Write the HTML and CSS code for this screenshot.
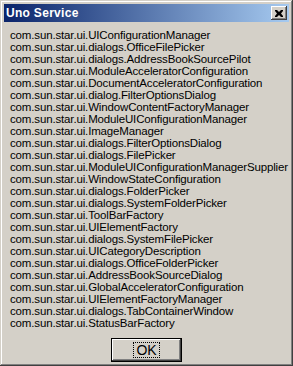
FILE: index.html
```html
<!DOCTYPE html>
<html lang="en">
<head>
  <meta charset="UTF-8">
  <title>Uno Service</title>
  <link rel="stylesheet" href="styles.css">
</head>
<body>

  <div class="window">
    <div class="caption">
      <span class="caption-title">Uno Service</span>
      <button class="caption-close" type="button" aria-label="Close">
        <svg width="8" height="7" viewBox="0 0 8 7">
          <path d="M0 0h2l2 2 2-2h2v1L6 3.5 8 6v1H6L4 5 2 7H0V6l2-2.5L0 1z" fill="#000"/>
        </svg>
      </button>
    </div>

    <div class="client">
      <ul class="service-list">
        <li>com.sun.star.ui.UIConfigurationManager</li>
        <li>com.sun.star.ui.dialogs.OfficeFilePicker</li>
        <li>com.sun.star.ui.dialogs.AddressBookSourcePilot</li>
        <li>com.sun.star.ui.ModuleAcceleratorConfiguration</li>
        <li>com.sun.star.ui.DocumentAcceleratorConfiguration</li>
        <li>com.sun.star.ui.dialog.FilterOptionsDialog</li>
        <li>com.sun.star.ui.WindowContentFactoryManager</li>
        <li>com.sun.star.ui.ModuleUIConfigurationManager</li>
        <li>com.sun.star.ui.ImageManager</li>
        <li>com.sun.star.ui.dialogs.FilterOptionsDialog</li>
        <li>com.sun.star.ui.dialogs.FilePicker</li>
        <li>com.sun.star.ui.ModuleUIConfigurationManagerSupplier</li>
        <li>com.sun.star.ui.WindowStateConfiguration</li>
        <li>com.sun.star.ui.dialogs.FolderPicker</li>
        <li>com.sun.star.ui.dialogs.SystemFolderPicker</li>
        <li>com.sun.star.ui.ToolBarFactory</li>
        <li>com.sun.star.ui.UIElementFactory</li>
        <li>com.sun.star.ui.dialogs.SystemFilePicker</li>
        <li>com.sun.star.ui.UICategoryDescription</li>
        <li>com.sun.star.ui.dialogs.OfficeFolderPicker</li>
        <li>com.sun.star.ui.AddressBookSourceDialog</li>
        <li>com.sun.star.ui.GlobalAcceleratorConfiguration</li>
        <li>com.sun.star.ui.UIElementFactoryManager</li>
        <li>com.sun.star.ui.dialogs.TabContainerWindow</li>
        <li>com.sun.star.ui.StatusBarFactory</li>
      </ul>

      <div class="button-row">
        <button class="ok-button" type="button"><span class="focus">OK</span></button>
      </div>
    </div>
  </div>

</body>
</html>
```

FILE: styles.css
```css
html, body {
  margin: 0;
  padding: 0;
  background: #d4d0c8;
}
body {
  font-family: "Liberation Sans", Arial, sans-serif;
  color: #000;
}
.window {
  width: 293px;
  height: 366px;
  box-sizing: border-box;
  padding: 4px;
  background: #d4d0c8;
  box-shadow:
    inset -1px -1px #404040,
    inset 1px 1px #d4d0c8,
    inset -2px -2px #808080,
    inset 2px 2px #fff;
  display: flex;
  flex-direction: column;
}
.caption {
  height: 18px;
  flex: none;
  display: flex;
  align-items: center;
  justify-content: space-between;
  padding: 0 2px 0 2px;
  background: linear-gradient(to right, #0a246a, #a6caf0);
}
.caption-title {
  color: #fff;
  font-weight: bold;
  font-size: 12px;
  letter-spacing: 0.3px;
  line-height: 18px;
}
.caption-close {
  width: 16px;
  height: 14px;
  padding: 0;
  border: none;
  background: #d4d0c8;
  display: flex;
  align-items: center;
  justify-content: center;
  box-shadow:
    inset -1px -1px #404040,
    inset 1px 1px #fff,
    inset -2px -2px #808080;
}
.client {
  flex: 1;
  display: flex;
  flex-direction: column;
}
.service-list {
  list-style: none;
  margin: 0;
  padding: 7px 0 0 6px;
  font-size: 11.5px;
  line-height: 12px;
  letter-spacing: -0.15px;
}
.button-row {
  display: flex;
  justify-content: center;
  margin-top: 9px;
}
.ok-button {
  width: 71px;
  height: 24px;
  padding: 0;
  border: 1px solid #000;
  background: #d4d0c8;
  font-family: "Liberation Sans", Arial, sans-serif;
  font-size: 14px;
  color: #000;
  display: flex;
  align-items: center;
  justify-content: center;
  box-shadow:
    inset -1px -1px #404040,
    inset 1px 1px #fff,
    inset -2px -2px #808080;
}
.focus {
  padding: 0 2px;
  line-height: 14px;
  outline: 1px dotted #000;
}
```
